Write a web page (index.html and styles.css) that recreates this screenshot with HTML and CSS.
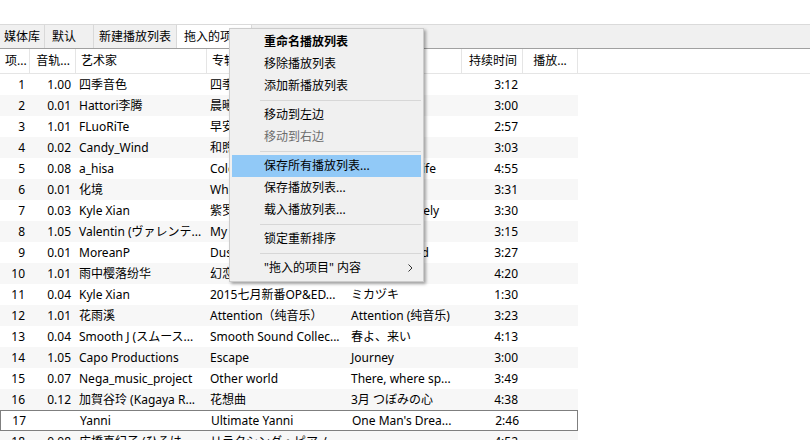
FILE: index.html
```html
<!DOCTYPE html>
<html lang="zh-CN">
<head>
<meta charset="utf-8">
<title>播放列表</title>
<link rel="stylesheet" href="styles.css">
</head>
<body>
<div class="app">
  <div class="top"></div>
  <div class="tabs">
    <div class="tab tab-first">媒体库</div>
    <div class="tab tab-default">默认</div>
    <div class="tab">新建播放列表</div>
    <div class="tab active">拖入的项目</div>
  </div>
  <div class="head">
    <div class="hc r">项...</div>
    <div class="hc r">音轨...</div>
    <div class="hc">艺术家</div>
    <div class="hc">专辑</div>
    <div class="hc">标题</div>
    <div class="hc r">持续时间</div>
    <div class="hc c">播放...</div>
  </div>
  <div class="rows">
    <div class="row"><span class="r">1</span><span class="r">1.00</span><span>四季音色</span><span>四季物语</span><span>春の風</span><span class="r">3:12</span><span></span></div>
    <div class="row"><span class="r">2</span><span class="r">0.01</span><span>Hattori李腾</span><span>晨曦微露</span><span>晨曦</span><span class="r">3:00</span><span></span></div>
    <div class="row"><span class="r">3</span><span class="r">1.01</span><span>FLuoRiTe</span><span>早安</span><span>早安</span><span class="r">2:57</span><span></span></div>
    <div class="row"><span class="r">4</span><span class="r">0.02</span><span>Candy_Wind</span><span>和煦的风</span><span>和煦</span><span class="r">3:03</span><span></span></div>
    <div class="row"><span class="r">5</span><span class="r">0.08</span><span>a_hisa</span><span>Colorful Life</span><span>A Beautiful Life</span><span class="r">4:55</span><span></span></div>
    <div class="row"><span class="r">6</span><span class="r">0.01</span><span>化境</span><span>White Snow</span><span>白雪</span><span class="r">3:31</span><span></span></div>
    <div class="row"><span class="r">7</span><span class="r">0.03</span><span>Kyle Xian</span><span>紫罗兰</span><span>Yours, Sincerely</span><span class="r">3:30</span><span></span></div>
    <div class="row"><span class="r">8</span><span class="r">1.05</span><span>Valentin (ヴァレンテ...</span><span>My Soul</span><span>My Soul</span><span class="r">3:15</span><span></span></div>
    <div class="row"><span class="r">9</span><span class="r">0.01</span><span>MoreanP</span><span>Dusk</span><span>Distant Island</span><span class="r">3:27</span><span></span></div>
    <div class="row"><span class="r">10</span><span class="r">1.01</span><span>雨中樱落纷华</span><span>幻恋</span><span>幻恋</span><span class="r">4:20</span><span></span></div>
    <div class="row"><span class="r">11</span><span class="r">0.04</span><span>Kyle Xian</span><span>2015七月新番OP&amp;ED...</span><span>ミカヅキ</span><span class="r">1:30</span><span></span></div>
    <div class="row"><span class="r">12</span><span class="r">1.01</span><span>花雨溪</span><span>Attention（纯音乐）</span><span>Attention (纯音乐)</span><span class="r">3:23</span><span></span></div>
    <div class="row"><span class="r">13</span><span class="r">0.04</span><span>Smooth J (スムース...</span><span>Smooth Sound Collec...</span><span>春よ、来い</span><span class="r">4:13</span><span></span></div>
    <div class="row"><span class="r">14</span><span class="r">1.05</span><span>Capo Productions</span><span>Escape</span><span>Journey</span><span class="r">3:00</span><span></span></div>
    <div class="row"><span class="r">15</span><span class="r">0.07</span><span>Nega_music_project</span><span>Other world</span><span>There, where sp...</span><span class="r">3:49</span><span></span></div>
    <div class="row"><span class="r">16</span><span class="r">0.12</span><span>加賀谷玲 (Kagaya R...</span><span>花想曲</span><span>3月 つぼみの心</span><span class="r">4:38</span><span></span></div>
    <div class="row focus"><span class="r">17</span><span class="r"></span><span>Yanni</span><span>Ultimate Yanni</span><span>One Man's Drea...</span><span class="r">2:46</span><span></span></div>
    <div class="row"><span class="r">18</span><span class="r">0.08</span><span>広橋真紀子 (ひろは...</span><span>リラクシング・ピアノ...</span><span></span><span class="r">4:52</span><span></span></div>
  </div>

  <div class="menu">
    <div class="mi bold">重命名播放列表</div>
    <div class="mi">移除播放列表</div>
    <div class="mi">添加新播放列表</div>
    <div class="sep"></div>
    <div class="mi">移动到左边</div>
    <div class="mi dis">移动到右边</div>
    <div class="sep"></div>
    <div class="mi hl">保存所有播放列表...</div>
    <div class="mi">保存播放列表...</div>
    <div class="mi">载入播放列表...</div>
    <div class="sep"></div>
    <div class="mi">锁定重新排序</div>
    <div class="sep"></div>
    <div class="mi sub"><span>"拖入的项目" 内容</span><svg class="chev" width="5" height="8" viewBox="0 0 5 8"><path d="M0.5 0.5 L4 4 L0.5 7.5" fill="none" stroke="#333" stroke-width="1"/></svg></div>
  </div>
</div>
</body>
</html>
```

FILE: styles.css
```css
html, body {
  margin: 0;
  padding: 0;
  background: #ffffff;
}

body {
  font-family: "Noto Sans", "Noto Sans CJK SC", sans-serif;
  font-size: 12px;
  color: #000;
  overflow: hidden;
}

.app {
  position: relative;
  width: 810px;
  height: 440px;
  overflow: hidden;
}

.top {
  height: 24px;
  background: #ffffff;
}

.tabs {
  display: flex;
  height: 23px;
  background: #f0f0f0;
  border-top: 1px solid #dadada;
  border-bottom: 1px solid #a0a0a0;
}

.tab {
  padding: 0 5px;
  line-height: 23px;
  border-right: 1px solid #d9d9d9;
  white-space: nowrap;
}

.tab-first {
  padding: 0 4px;
}

.tab-default {
  padding: 0 17px 0 7px;
}

.tab.active {
  background: #ffffff;
  padding: 0 7px;
  border-left: 1px solid #d9d9d9;
  margin-left: -1px;
}

.head,
.row {
  display: grid;
  grid-template-columns: 30px 46px 131px 141px 114px 61px 55px;
}

.head {
  height: 24px;
  border-bottom: 1px solid #e5e5e5;
  grid-template-columns: 30px 46px 131px 141px 114px 61px 55px 1fr;
}

.hc {
  box-sizing: border-box;
  line-height: 24px;
  padding: 0 5px;
  border-right: 1px solid #e5e5e5;
  white-space: nowrap;
  overflow: hidden;
}

.hc.r { text-align: right; }
.hc.c { text-align: center; }

.rows {
  width: 578px;
}

.row {
  height: 21px;
  line-height: 21px;
  box-sizing: border-box;
}

.row:nth-child(even) {
  background: #f7f7f7;
}

.row > span {
  padding: 0 4px 0 3px;
  white-space: nowrap;
  overflow: hidden;
}

.row > span.r {
  text-align: right;
  padding: 0 5px 0 3px;
}

.row.focus {
  border: 1px solid #7f7f7f;
  line-height: 19px;
}

.menu {
  position: absolute;
  left: 229px;
  top: 28px;
  width: 195px;
  box-sizing: border-box;
  padding: 2px;
  background: #f0f0f0;
  border: 1px solid #cccccc;
  box-shadow: 2px 2px 3px rgba(0, 0, 0, 0.35);
}

.mi {
  height: 22px;
  line-height: 22px;
  padding-left: 32px;
  white-space: nowrap;
}

.mi.bold { font-weight: bold; }
.mi.dis { color: #6d6d6d; }
.mi.hl { background: #91c9f7; }

.mi.sub {
  display: flex;
  align-items: center;
  justify-content: space-between;
  padding-right: 8px;
}

.chev {
  display: block;
}

.sep {
  height: 1px;
  margin: 3px 0 3px 28px;
  background: #d7d7d7;
}
```
